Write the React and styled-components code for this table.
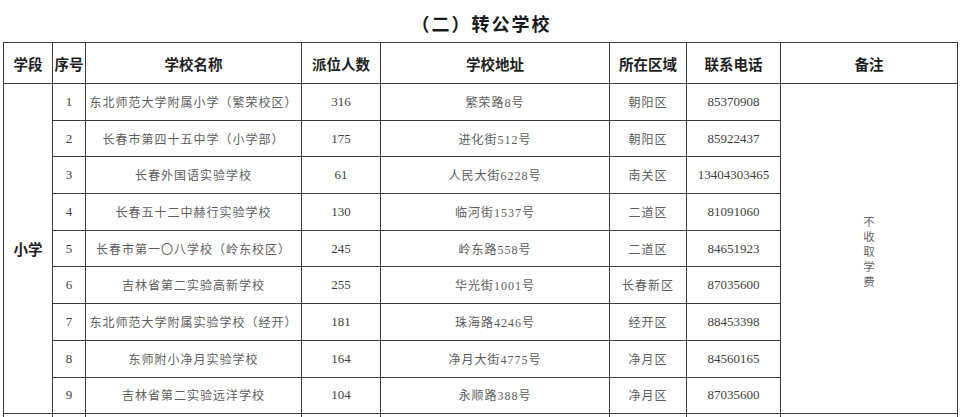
import React from 'react';
import styled, { createGlobalStyle } from 'styled-components';

const rows = [
  { no: 1, name: '东北师范大学附属小学（繁荣校区）', count: 316, addr: '繁荣路8号', area: '朝阳区', tel: '85370908' },
  { no: 2, name: '长春市第四十五中学（小学部）', count: 175, addr: '进化街512号', area: '朝阳区', tel: '85922437' },
  { no: 3, name: '长春外国语实验学校', count: 61, addr: '人民大街6228号', area: '南关区', tel: '13404303465' },
  { no: 4, name: '长春五十二中赫行实验学校', count: 130, addr: '临河街1537号', area: '二道区', tel: '81091060' },
  { no: 5, name: '长春市第一〇八学校（岭东校区）', count: 245, addr: '岭东路558号', area: '二道区', tel: '84651923' },
  { no: 6, name: '吉林省第二实验高新学校', count: 255, addr: '华光街1001号', area: '长春新区', tel: '87035600' },
  { no: 7, name: '东北师范大学附属实验学校（经开）', count: 181, addr: '珠海路4246号', area: '经开区', tel: '88453398' },
  { no: 8, name: '东师附小净月实验学校', count: 164, addr: '净月大街4775号', area: '净月区', tel: '84560165' },
  { no: 9, name: '吉林省第二实验远洋学校', count: 104, addr: '永顺路388号', area: '净月区', tel: '87035600' },
];

const GlobalStyle = createGlobalStyle`
  html, body {
    margin: 0;
    padding: 0;
    background: #fff;
    overflow: hidden;
  }
`;

const Page = styled.div`
  width: 960px;
  height: 417px;
  overflow: hidden;
  padding-left: 3px;
  box-sizing: border-box;
`;

const Title = styled.h2`
  margin: 0;
  height: 42px;
  padding-top: 3px;
  box-sizing: border-box;
  display: flex;
  align-items: center;
  justify-content: center;
  font-family: "Noto Sans CJK SC", sans-serif;
  font-size: 18px;
  font-weight: 700;
  letter-spacing: 2px;
  color: #1a1a1a;
`;

const Table = styled.table`
  width: 954px;
  table-layout: fixed;
  border-collapse: collapse;
  border: 1.5px solid #5a5a5a;
`;

const HeadCell = styled.th`
  height: 40px;
  padding: 0;
  border: 1px solid #3c3c3c;
  font-family: "Noto Sans CJK SC", sans-serif;
  font-size: 14.5px;
  font-weight: 700;
  color: #1e1e1e;
  text-align: center;
  vertical-align: middle;
`;

const Cell = styled.td`
  height: 35.7px;
  padding: 0;
  border: 1px solid #3c3c3c;
  text-align: center;
  vertical-align: middle;
  white-space: nowrap;
  color: ${(p) => (p.$num ? '#3f3f3f' : '#5e5e5e')};
  font-family: ${(p) =>
    p.$num ? '"Liberation Serif", serif' : '"Liberation Serif", "Noto Sans CJK SC", serif'};
  font-size: ${(p) => (p.$num ? '13px' : '12px')};
  letter-spacing: ${(p) => (p.$num ? '0' : '1px')};
`;

const GroupCell = styled.td`
  padding: 0;
  border: 1px solid #3c3c3c;
  text-align: center;
  vertical-align: middle;
  font-family: "Noto Sans CJK SC", sans-serif;
  font-size: 14.5px;
  font-weight: 700;
  color: #1e1e1e;
`;

const NoteCell = styled.td`
  padding: 0;
  border: 1px solid #3c3c3c;
  text-align: center;
  vertical-align: middle;
`;

const VerticalNote = styled.div`
  display: inline-flex;
  flex-direction: column;
  align-items: center;
  margin-top: 5px;
  font-family: "Noto Sans CJK SC", sans-serif;
  font-size: 11.5px;
  line-height: 15px;
  color: #666;
`;

const widths = [49, 33, 216, 79, 229, 77, 94, 177];

export default function App() {
  return (
    <Page>
      <GlobalStyle />
      <Title>（二）转公学校</Title>
      <Table>
        <colgroup>
          {widths.map((w, i) => (
            <col key={i} style={{ width: w }} />
          ))}
        </colgroup>
        <thead>
          <tr>
            <HeadCell>学段</HeadCell>
            <HeadCell>序号</HeadCell>
            <HeadCell>学校名称</HeadCell>
            <HeadCell>派位人数</HeadCell>
            <HeadCell>学校地址</HeadCell>
            <HeadCell>所在区域</HeadCell>
            <HeadCell>联系电话</HeadCell>
            <HeadCell>备注</HeadCell>
          </tr>
        </thead>
        <tbody>
          {rows.map((r, i) => (
            <tr key={r.no}>
              {i === 0 && <GroupCell rowSpan={rows.length}>小学</GroupCell>}
              <Cell $num>{r.no}</Cell>
              <Cell>{r.name}</Cell>
              <Cell $num>{r.count}</Cell>
              <Cell>{r.addr}</Cell>
              <Cell>{r.area}</Cell>
              <Cell $num>{r.tel}</Cell>
              {i === 0 && (
                <NoteCell rowSpan={rows.length}>
                  <VerticalNote>
                    {'不收取学费'.split('').map((c, k) => (
                      <span key={k}>{c}</span>
                    ))}
                  </VerticalNote>
                </NoteCell>
              )}
            </tr>
          ))}
          <tr>
            <GroupCell />
            <Cell $num />
            <Cell />
            <Cell $num />
            <Cell />
            <Cell />
            <Cell $num />
            <NoteCell />
          </tr>
        </tbody>
      </Table>
    </Page>
  );
}
